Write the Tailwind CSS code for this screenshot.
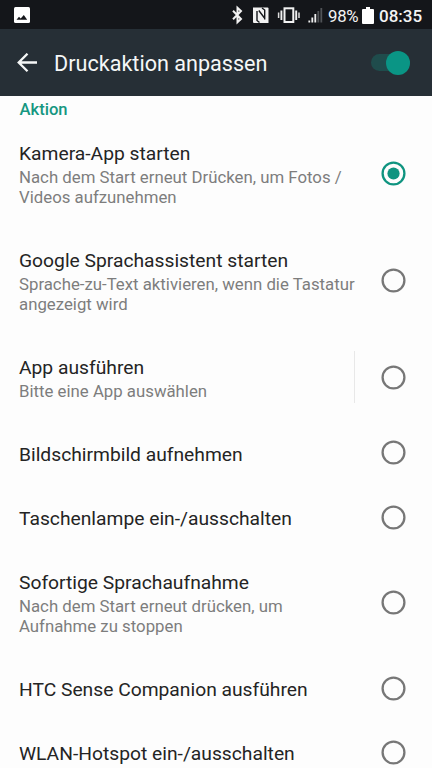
<!DOCTYPE html>
<html lang="de">
<head>
<meta charset="utf-8">
<title>Druckaktion anpassen</title>
<script src="https://cdn.jsdelivr.net/npm/@tailwindcss/browser@4"></script>
</head>
<body class="w-[432px] h-[768px] overflow-hidden bg-[#fdfdfd] font-['Roboto','Liberation_Sans',sans-serif] text-[#242424]">
<svg class="hidden">
  <symbol id="off" viewBox="0 0 25 25"><circle cx="12.500" cy="12.500" r="10.900" fill="none" stroke="#777" stroke-width="2.300"/></symbol>
  <symbol id="on" viewBox="0 0 25 25"><circle cx="12.500" cy="12.500" r="10.900" fill="none" stroke="#0f9480" stroke-width="2.300"/><circle cx="12.500" cy="12.500" r="6.100" fill="#0f9480"/></symbol>
</svg>
<div class="h-[768px] overflow-hidden">
<div class="h-[29px] bg-[#14161a] flex items-center pl-[14px] pr-[9px] text-[#f4f4f4]">
  <svg class="w-4 h-4 shrink-0" viewBox="0 0 16 16"><rect width="16" height="16" rx="1.500" fill="#fff"/><path d="M2.500 12.700 5 9.800l1.700 1.700L9.800 8l3.400 4.700z" fill="#14161a"/></svg>
  <svg class="ml-[200px] w-[100px] h-[29px] shrink-0" viewBox="230 0 100 29" fill="none">
    <path d="M233 10.800 241 19 237.500 22.300V7.700L241 11 233 19.200" stroke="#f2f2f2" stroke-width="2"/>
    <path fill="#f2f2f2" d="M253 7.500H267.500a1 1 0 0 1 1 1V23H254a1 1 0 0 1-1-1z"/>
    <path d="M259.500 22.500 257 20.500V11M262 8l2.700 2V19.500M258.800 10.500 264.500 18" stroke="#14161a" stroke-width="1.400"/>
    <rect x="284.500" y="8.300" width="8.800" height="13.700" stroke="#f2f2f2" stroke-width="2"/>
    <path d="M281.400 10.500v9.500M296.200 10.500v9.500" stroke="#f2f2f2" stroke-width="1.900"/>
    <path d="M278.600 12.500v5.500M299 12.500v5.500" stroke="#ddd" stroke-width="1.500"/>
    <path d="M309.300 20.500v2M312.300 17.500v5M315.300 14v8.500" stroke="#eee" stroke-width="1.800"/>
    <path d="M318.300 11v11.500M321.300 8v14.500" stroke="#505357" stroke-width="1.800"/>
  </svg>
  <span class="-ml-[2px] w-[34px] text-[16.800px] leading-none tracking-[-0.3px] whitespace-nowrap pt-[3px]">98%</span>
  <svg class="w-3 h-[17px] mt-px shrink-0" viewBox="0 0 12 17"><path fill="#fff" d="M4 0h4v2h3a1 1 0 0 1 1 1v13a1 1 0 0 1-1 1H1a1 1 0 0 1-1-1V3a1 1 0 0 1 1-1h3z"/></svg>
  <span class="ml-[5px] text-[17px] leading-none font-medium whitespace-nowrap pt-[3px]">08:35</span>
</div>
<header class="h-[67px] bg-[#262f36] flex items-center pl-[17px] pr-[22px] text-[#f5f7f7]">
  <svg class="w-5 h-5 shrink-0" viewBox="0 0 20 20" fill="none" stroke="#f5f7f7" stroke-width="2.300"><path d="M20 9.500H1.800M10.500.7 1.700 9.500l8.800 8.800"/></svg>
  <h1 class="ml-[17px] text-[21.600px] leading-[26px] whitespace-nowrap pt-[2px]">Druckaktion anpassen</h1>
  <span class="ml-auto w-[39px] h-[17px] rounded-full bg-[#1f4c4c] flex items-center justify-end"><span class="w-6 h-6 shrink-0 rounded-full bg-[#0a9585]"></span></span>
</header>
<main class="pl-[19px] pr-[26px] flex flex-col">
  <h2 class="h-6 pt-[4px] pl-[0.5px] text-[16.600px] leading-5 font-medium text-[#169781]">Aktion</h2>
  <div class="h-[107px] flex items-center justify-between">
    <div class="whitespace-nowrap pt-px"><p class="text-[19.250px] leading-6 pb-px">Kamera-App starten</p><p class="text-[16.800px] leading-[20px] text-[#7d7d7d]">Nach dem Start erneut Drücken, um Fotos /<br>Videos aufzunehmen</p></div>
    <svg class="w-[25px] h-[25px] shrink-0"><use href="#on"/></svg>
  </div>
  <div class="h-[107px] flex items-center justify-between">
    <div class="whitespace-nowrap pt-px"><p class="text-[19.250px] leading-6 pb-px">Google Sprachassistent starten</p><p class="text-[16.800px] leading-[20px] text-[#7d7d7d]">Sprache-zu-Text aktivieren, wenn die Tastatur<br>angezeigt wird</p></div>
    <svg class="w-[25px] h-[25px] shrink-0"><use href="#off"/></svg>
  </div>
  <div class="h-[86px] flex items-center">
    <div class="whitespace-nowrap pt-[2px]"><p class="text-[19.250px] leading-6 pb-px">App ausführen</p><p class="text-[16.800px] leading-[20px] text-[#7d7d7d]">Bitte eine App auswählen</p></div>
    <span class="ml-auto w-px h-[52px] bg-[#e8e8e8]"></span>
    <svg class="ml-[26px] w-[25px] h-[25px] shrink-0"><use href="#off"/></svg>
  </div>
  <div class="h-[65px] flex items-center justify-between">
    <p class="text-[19.250px] leading-[25px] whitespace-nowrap pt-[3px]">Bildschirmbild aufnehmen</p>
    <svg class="w-[25px] h-[25px] shrink-0"><use href="#off"/></svg>
  </div>
  <div class="h-16 flex items-center justify-between">
    <p class="text-[19.250px] leading-[25px] whitespace-nowrap pt-[3px]">Taschenlampe ein-/ausschalten</p>
    <svg class="w-[25px] h-[25px] shrink-0"><use href="#off"/></svg>
  </div>
  <div class="h-[107px] flex items-center justify-between">
    <div class="whitespace-nowrap pt-px"><p class="text-[19.250px] leading-6 pb-px">Sofortige Sprachaufnahme</p><p class="text-[16.800px] leading-[20px] text-[#7d7d7d]">Nach dem Start erneut drücken, um<br>Aufnahme zu stoppen</p></div>
    <svg class="w-[25px] h-[25px] shrink-0"><use href="#off"/></svg>
  </div>
  <div class="h-16 flex items-center justify-between">
    <p class="text-[19.250px] leading-[25px] whitespace-nowrap pt-[3px]">HTC Sense Companion ausführen</p>
    <svg class="w-[25px] h-[25px] shrink-0"><use href="#off"/></svg>
  </div>
  <div class="h-16 flex items-center justify-between">
    <p class="text-[19.250px] leading-[25px] whitespace-nowrap pt-[3px]">WLAN-Hotspot ein-/ausschalten</p>
    <svg class="w-[25px] h-[25px] shrink-0"><use href="#off"/></svg>
  </div>
</main>
</div>
</body>
</html>
